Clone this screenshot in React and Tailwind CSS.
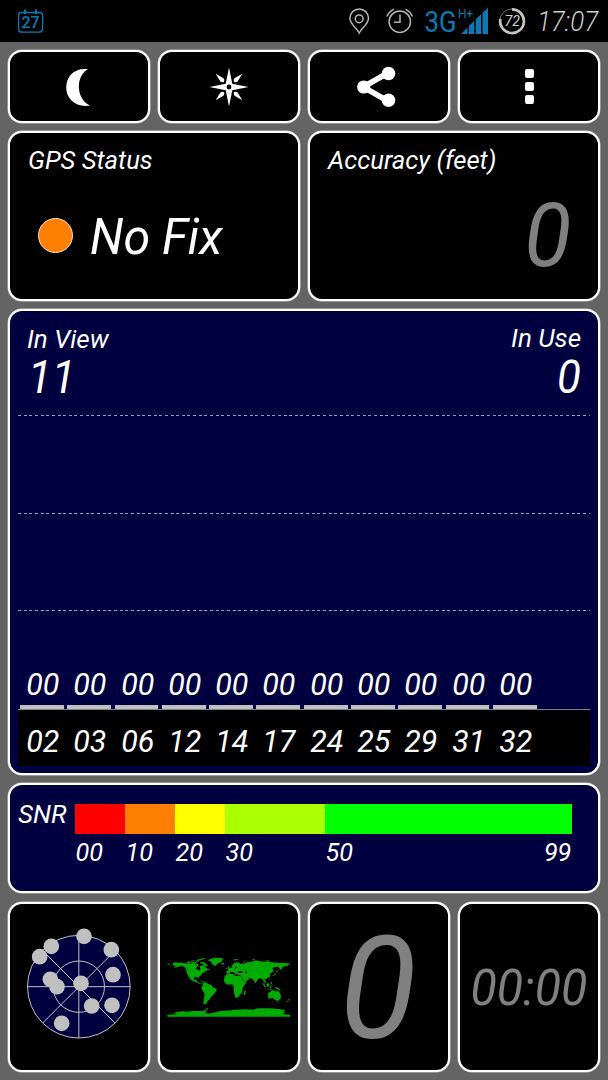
const satellites = ['02', '03', '06', '12', '14', '17', '24', '25', '29', '31', '32'];

const snrScale = [
  { label: '00', cell: 'w-[50px]', color: 'bg-[#ff0000]' },
  { label: '10', cell: 'w-[50px]', color: 'bg-[#ff8000]' },
  { label: '20', cell: 'w-[50px]', color: 'bg-[#ffff00]' },
  { label: '30', cell: 'w-[100px]', color: 'bg-[#aaff00]' },
  { label: '50', cell: 'flex-1', color: 'bg-[#00ff00]' },
];

const skyDots = [
  [252, 109], [154, 139], [119, 170], [334, 149], [339, 224], [151, 238],
  [171, 260], [243, 250], [275, 318], [336, 316], [185, 370],
];

function Panel({ className = '', children }) {
  return (
    <div className={`rounded-[14px] border-2 border-white shadow-[0_0_0_0.5px_#c8c8c8] ${className}`}>
      {children}
    </div>
  );
}

function StatusBar() {
  return (
    <header className="flex h-[42px] items-center bg-black pl-[18px] text-[#b4b4b4]">
      <svg className="h-[42px] w-[26px]" viewBox="18 0 26 42" fill="none" stroke="#0a7ab4">
        <rect x="18.6" y="12.5" width="24" height="19.6" rx="3" strokeWidth="1.3" />
        <path d="M25 9.5v4.5M36 9.5v4.5" strokeWidth="2" />
        <text x="30.6" y="27.700" textAnchor="middle" fontSize="16" fontWeight="500" fill="#0a7ab4" stroke="none">27</text>
      </svg>
      <div className="flex-1" />
      <svg className="h-[42px] w-[190px] shrink-0" viewBox="344 0 190 42" fill="none" stroke="#b4b4b4" strokeWidth="1.5">
        <path d="M359.2 33c-2-4.500-9.300-8.800-9.300-14.800a9.300 9.300 0 0 1 18.600 0c0 6-7.300 10.300-9.300 14.800z" />
        <circle cx="359.200" cy="18.800" r="3.900" />
        <circle cx="399.800" cy="21.700" r="10.700" />
        <path d="M400 14.500v7.700h-6M386.800 16.500q2.500-5 7-7.300M412.500 16.500q-2.500-5-7-7.300" />
        <g fill="#0a7ab4" stroke="none">
          <text transform="translate(424.500 32) scale(0.860 1)" fontSize="30">3G</text>
          <text transform="translate(458 18) scale(0.920 1)" fontSize="13">H+</text>
          <path d="M461 34l6.500-6.500V34zM469 26l5.200-5.200V34H469zM475.700 19.500l5.300-5.300V34h-5.300zM482.500 12.800l5.500-5.100V34h-5.500z" />
        </g>
        <circle cx="512" cy="21.200" r="12.300" strokeWidth="1" stroke="#777" />
        <path d="M512 9.300a11.900 11.900 0 1 1-11.700 9.800" strokeWidth="2.700" stroke="#c4c4c4" />
        <text x="512.300" y="26.300" textAnchor="middle" fontSize="15" fontStyle="italic" fill="#d0d0d0" stroke="none" textLength="15.500" lengthAdjust="spacingAndGlyphs">72</text>
      </svg>
      <span className="w-[74px] shrink-0 origin-left scale-x-[0.96] pt-[2px] pl-[3px] text-[27px] leading-none font-light text-[#cccccc] italic">17:07</span>
    </header>
  );
}

function Toolbar() {
  const box = 'flex h-[73px] items-center justify-center bg-black';
  return (
    <div className="grid grid-cols-4 gap-2">
      <Panel className={box}>
        <svg className="h-[40px] w-[40px]" viewBox="0 0 40 40" fill="#fff">
          <path d="M29 2.300C16 0.500 7.200 9 7.200 20.500S17 41 31 38.600C16.500 31.500 16.500 9 29 2.300z" />
        </svg>
      </Panel>
      <Panel className={box}>
        <svg className="h-[40px] w-[40px]" viewBox="-20 -20 40 40" fill="#fff">
          <path d="M0-19.500L3.300-3.300 19.500 0 3.300 3.300 0 19.500-3.300 3.300-19.500 0-3.300-3.300z" />
          {[45, 135, 225, 315].map((angle) => (
            <path key={angle} d="M0-18.800L2.200-10Q2.300-8.300 0-7Q-2.300-8.300-2.200-10z" transform={`rotate(${angle})`} />
          ))}
          <circle r="2.400" fill="#000" />
        </svg>
      </Panel>
      <Panel className={box}>
        <svg className="h-[42px] w-[42px] overflow-visible" viewBox="2 0 42 42" fill="#fff">
          <path d="M31 7.500L7 21l24 13.500" fill="none" stroke="#fff" strokeWidth="5.500" />
          <circle cx="7.700" cy="21" r="6.600" />
          <circle cx="32.500" cy="7.500" r="6.800" />
          <circle cx="32.500" cy="34.300" r="6.800" />
        </svg>
      </Panel>
      <Panel className={box}>
        <div className="flex flex-col gap-[4px]">
          <span className="size-[9px] rounded-[2px] bg-white" />
          <span className="size-[9px] rounded-[2px] bg-white" />
          <span className="size-[9px] rounded-[2px] bg-white" />
        </div>
      </Panel>
    </div>
  );
}

function SatelliteChart() {
  return (
    <Panel className="flex h-[466px] flex-col bg-[#000040] px-2 pb-[7px]">
      <div className="flex justify-between px-[9px] pt-[13px]">
        <div>
          <p className="text-[26px] leading-[30px]">In View</p>
          <p className="origin-left scale-x-[0.95] pl-px text-[46px] leading-[46px]">11</p>
        </div>
        <div className="text-right">
          <p className="text-[26px] leading-[29px]">In Use</p>
          <p className="origin-right scale-x-[0.95] text-[46px] leading-[48px]">0</p>
        </div>
      </div>
      <div className="mt-[14px] flex flex-col gap-[96.500px]">
        <div className="h-px bg-[repeating-linear-gradient(90deg,#9c9cb8_0_3px,transparent_3px_5.650px)]" />
        <div className="h-px bg-[repeating-linear-gradient(90deg,#9c9cb8_0_3px,transparent_3px_5.650px)]" />
        <div className="h-px bg-[repeating-linear-gradient(90deg,#9c9cb8_0_3px,transparent_3px_5.650px)]" />
      </div>
      <div className="mt-auto flex pl-[2px]">
        {satellites.map((id) => (
          <div key={id} className="w-[47.300px] pr-[3.500px] text-center">
            <p className="mb-[5px] scale-x-[0.95] pl-[2px] text-[32px] leading-[32px]">00</p>
            <div className="h-[4px] bg-[#c0c0c0]" />
          </div>
        ))}
      </div>
      <div className="flex h-[57px] items-center border-t border-[#808090] bg-black pt-[6px] pl-[2px]">
        {satellites.map((id) => (
          <p key={id} className="w-[47.300px] scale-x-[0.95] pr-[2px] text-center text-[32px] leading-[32px]">{id}</p>
        ))}
      </div>
    </Panel>
  );
}

function SnrLegend() {
  return (
    <Panel className="flex h-[110px] bg-[#000040] pt-[19px] pr-[26px] pl-[8px]">
      <p className="w-[57px] text-[26px] leading-[20px]">SNR</p>
      <div className="flex-1">
        <div className="flex h-[30px]">
          {snrScale.map((step) => (
            <div key={step.label} className={`${step.cell} ${step.color}`} />
          ))}
        </div>
        <div className="flex pt-[4px] text-[26px] leading-[28px]">
          {snrScale.map((step) => (
            <div key={step.label} className={`${step.cell} flex justify-between`}>
              <span className="origin-left scale-x-[0.97] pl-[0.500px]">{step.label}</span>
              {step.label === '50' && <span className="origin-right scale-x-[0.97] pr-px">99</span>}
            </div>
          ))}
        </div>
      </div>
    </Panel>
  );
}

function SkyView() {
  return (
    <svg className="h-[166px] w-[138px]" viewBox="30 12 414 498" fill="none" stroke="#c0c0c0" strokeWidth="3">
      <circle cx="236.500" cy="260" r="154" fill="#000040" />
      <circle cx="236.500" cy="260" r="77" />
      <path d="M82 260h309M236.500 106v308M128 152l217 217M345 152L128 369" />
      {skyDots.map(([x, y]) => (
        <circle key={`${x}-${y}`} cx={x} cy={y} r="23.500" fill="#c0c0c0" stroke="none" />
      ))}
    </svg>
  );
}

function WorldMap() {
  return (
    <svg className="h-[62px] w-[124px]" viewBox="44 49 372 186" fill="#00aa00">
      <path d="M62 69l10-1 13 2 15 1 12 1 13 2 10-3 3 7-6 4-2 6 8 2 4 4 2-6-2-8 8-3 8 4 5 4 5 6-8 3-2 3-8 4-4 6-6 4 0 6-4-5-8-1-4 4 2 6 8-2-1 6 7 4 8 3 2 2-8-1-10-5-10-4-8-5-6-10-5-10-1-8-4-8-10-4-10 2-14 4 6-6-8-2z" />
      <path d="M45 71l10 2-3 2-7-1zM102 67l8-2 6 4-8 1zM114 69l10-2 8 1-4 4-12 0zM116 63l12-1-3 3-10 1zM130 64l8-2 4 2-10 3zM134 60l12-3 14-3-4 4-10 4-10 1zM144 67l10 1 8 4 4 7-6 3-6-7-10-5zM165 62l15-6 20-2 12 2-4 10-12 6-8 7-8-5-3-8zM207 71l7-1 3 2-5 3-5-1zM168 86l5 5-5 1zM142 123l8 0 8 4-6-1zM159 127l7 1-4 2z" />
      <path d="M150 130l8-2 10 5 10 4 4 6 12 5-4 9-6 7-8 8-6 8-6 6-3 8-8-2 1-12 3-12-1-8-6-8-3-7 4-7z" />
      <path d="M222 104l12-2 10 2 4 4 16 0 5 8 5 10 9 1-7 10-6 9 0 12-6 6-6 9-8 2-4-11-2-12 0-12-4-6-12 1-8-3-5-7 1-12zM276 155l5-3-2 13-5 1z" />
      {/* Eurasia, clockwise from Iberia */}
      <path d="M222 101L222 94 228 93 226 88 234 85 241 82 237 78 246 71 258 68 264 73 272 73 285 68 296 67 310 62 322 65 340 66 360 68 380 70 400 70 414 72 406 78 392 81 386 91 381 85 378 81 366 82 360 86 364 93 358 99 352 102 354 110 346 115 341 119 336 119 339 125 342 133 335 127 331 119 323 116 315 121 310 131 305 123 300 117 288 114 291 118 284 123 274 126 268 113 266 107 257 105 254 101 250 105 246 99 240 97 235 97 230 102z" />
      <path d="M256 96l8-2 8 3-6 3-9 0zM278 93l4 2 1 7-4-2zM252 77l1 6-5 4-2-1 4-4z" fill="#000" />
      <path d="M226 82l4-2 2 7-5 3zM221 85l3 1-2 3-2-1zM243 59l14-1-2 4-10 0zM270 68l10-5 7-1-10 4-4 3zM297 60l9-2 3 3-8 0zM338 64l10-2 6 2-10 2zM374 91l4 4-6 2zM372 98l-1 6-8 5-4 0 8-5zM352 116l2 4-3 0zM354 124l5 5 1 7-4-4zM330 128l8 8 3 8-6-4zM343 133l6-3 3 6-5 7-5-4zM354 138l4-1-2 8-3-1zM341 146l14 2 8 1-9 1zM366 141l8 2 9 5 1 4-9-3zM390 146l4 3-4-1z" />
      <path d="M347 160l7-4 8-5 8 2 4 4 3-7 5 10 4 8-2 10-8 6-8-4-8-6-12 3zM374 187l4 0-2 3zM409 177l3 2-4 5-5 4-2-1 6-5z" />
      <path d="M45 231l0-6 30-1-12-3 9-3 18-3 15 1 15-2 30 0 9-3 5-7 4 1-7 9-3 5 10 3 22-4 15-4 35-2 5-2 35-1 20 1 20-4 30 0 30 2 20 3-6 4 3 4-5 4 22 2 0 6z" />
    </svg>
  );
}

export default function App() {
  const tile = 'flex h-[170px] items-center justify-center bg-black';
  return (
    <div className="h-[1080px] w-[608px] overflow-hidden bg-[#646464] font-[Roboto,sans-serif] text-white">
      <StatusBar />
      <main className="flex flex-col gap-2 p-2 italic">
        <Toolbar />
        <div className="grid grid-cols-2 gap-2">
          <Panel className="h-[170px] bg-black px-[18px] pt-[12px]">
            <p className="origin-left scale-x-[0.985] text-[26px] leading-[30px]">GPS Status</p>
            <div className="mt-[35px] flex items-start pl-[10px]">
              <span className="mt-[8px] size-[35px] rounded-full border border-[#ffe0c0] bg-[#ff8000]" />
              <span className="ml-[17px] origin-left scale-x-[0.985] text-[49px] leading-[56px]">No Fix</span>
            </div>
          </Panel>
          <Panel className="h-[170px] bg-black px-[18px] pt-[12px]">
            <p className="origin-left scale-x-[0.985] text-[26px] leading-[30px]">Accuracy (feet)</p>
            <p className="mt-[13px] origin-right scale-x-[0.97] pr-[9px] text-right text-[89px] leading-[96px] text-[#808080]">0</p>
          </Panel>
        </div>
        <SatelliteChart />
        <SnrLegend />
        <div className="mt-px grid grid-cols-4 gap-2">
          <Panel className={tile}>
            <SkyView />
          </Panel>
          <Panel className={tile}>
            <WorldMap />
          </Panel>
          <Panel className={`${tile} text-[143px] leading-none text-[#808080]`}>
            <span className="scale-x-[0.99] pt-[4px] pr-[3px]">0</span>
          </Panel>
          <Panel className={`${tile} text-[49.500px] leading-none text-[#808080]`}>
            <span className="scale-x-[0.975] pt-[3px]">00:00</span>
          </Panel>
        </div>
      </main>
    </div>
  );
}
